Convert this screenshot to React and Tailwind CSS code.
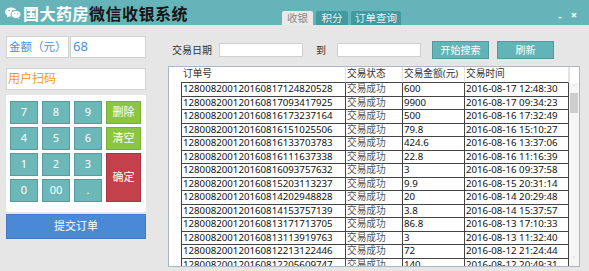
import React from "react";

const orders = [
  ["128008200120160817124820528", "600", "2016-08-17 12:48:30"],
  ["128008200120160817093417925", "9900", "2016-08-17 09:34:23"],
  ["128008200120160816173237164", "500", "2016-08-16 17:32:49"],
  ["128008200120160816151025506", "79.8", "2016-08-16 15:10:27"],
  ["128008200120160816133703783", "424.6", "2016-08-16 13:37:06"],
  ["128008200120160816111637338", "22.8", "2016-08-16 11:16:39"],
  ["128008200120160816093757632", "3", "2016-08-16 09:37:58"],
  ["128008200120160815203113237", "9.9", "2016-08-15 20:31:14"],
  ["128008200120160814202948828", "20", "2016-08-14 20:29:48"],
  ["128008200120160814153757139", "3.8", "2016-08-14 15:37:57"],
  ["128008200120160813171713705", "86.8", "2016-08-13 17:10:33"],
  ["128008200120160813113919763", "3", "2016-08-13 11:32:40"],
  ["128008200120160812213122446", "72", "2016-08-12 21:24:44"],
  ["128008200120160812205609747", "140", "2016-08-12 20:49:31"],
];

function WechatIcon() {
  return (
    <svg width="16" height="12" viewBox="0 0 16 12">
      <ellipse cx="6" cy="5" rx="6" ry="4.6" fill="#fff" />
      <path d="M2.5 8 L2 10.5 L5 9" fill="#fff" />
      <ellipse cx="11" cy="7.4" rx="5" ry="4" fill="#fff" stroke="#66b4b9" strokeWidth="1" />
      <path d="M13.5 10.5 L14.5 12 L12 11" fill="#fff" />
      <circle cx="4" cy="3.6" r="0.8" fill="#66b4b9" />
      <circle cx="8" cy="3.6" r="0.8" fill="#66b4b9" />
      <circle cx="9.4" cy="6.6" r="0.6" fill="#66b4b9" />
      <circle cx="12.6" cy="6.6" r="0.6" fill="#66b4b9" />
    </svg>
  );
}

function Header() {
  return (
    <div className="flex h-[25px] bg-[#66b4b9]">
      <div className="w-[282px] flex items-center pl-[5px] gap-[2px]">
        <WechatIcon />
        <span className="text-[16px] font-bold leading-none tracking-[0.5px] font-['Noto_Sans_CJK_SC',serif]">
          <span className="text-white">国大药房</span>
          <span className="text-[#151515]">微信收银系统</span>
        </span>
      </div>
      <div className="flex items-end gap-[3px] text-[10.5px] leading-none">
        <div className="w-[31px] h-[14px] bg-[#e9e9e9] text-[#888] rounded-t-[2px] flex items-center justify-center">收银</div>
        <div className="w-[32px] h-[14px] bg-[#3f9b9f] text-[#e8f4f4] rounded-t-[2px] flex items-center justify-center">积分</div>
        <div className="w-[50px] h-[14px] bg-[#3f9b9f] text-[#e8f4f4] rounded-t-[2px] flex items-center justify-center">订单查询</div>
      </div>
      <div className="ml-auto flex items-start pt-[9px] pr-[12px] gap-[9px] text-white text-[11px] font-bold leading-none">
        <span className="mt-[1px]">-</span>
        <span>×</span>
      </div>
    </div>
  );
}

function Key({ label, className = "" }) {
  return (
    <div className={`bg-[#6cb8b9] border border-[#5a9a9c] text-white text-[11px] flex items-center justify-center ${className}`}>
      {label}
    </div>
  );
}

function LeftPanel() {
  return (
    <div className="w-[140px] ml-[6px] pt-[11px] flex flex-col">
      <div className="flex gap-[1px] h-[22px]">
        <div className="w-[63px] border border-[#d2d2d2] bg-white text-[#4a8fd9] text-[11.5px] flex items-center pl-[2px] whitespace-nowrap">金额（元）</div>
        <div className="flex-1 border border-[#d2d2d2] bg-white text-[#4a8fd9] text-[13px] flex items-center pl-[2px]">68</div>
      </div>
      <div className="mt-[10px] h-[22px] border border-[#d2d2d2] bg-white text-[#f5962a] text-[12px] flex items-center pl-[1px]">用户扫码</div>
      <div className="mt-[5px] h-[117px] bg-white pt-[6px] pl-[4px]">
        <div className="grid grid-cols-[28px_28px_28px_35px] grid-rows-[23px_23px_23px_23px] gap-x-[4px] gap-y-[3px]">
          <Key label="7" />
          <Key label="8" />
          <Key label="9" />
          <Key label="删除" className="bg-[#8cc63f] border-[#7bb036]" />
          <Key label="4" />
          <Key label="5" />
          <Key label="6" />
          <Key label="清空" className="bg-[#8cc63f] border-[#7bb036]" />
          <Key label="1" />
          <Key label="2" />
          <Key label="3" />
          <Key label="确定" className="row-span-2 bg-[#c2414b] border-[#a9353e]" />
          <Key label="0" />
          <Key label="00" />
          <Key label="." />
        </div>
      </div>
      <div className="mt-[2px] h-[25px] bg-[#4a89d6] border border-[#3f79c2] text-white text-[11px] flex items-center justify-center">提交订单</div>
    </div>
  );
}

const cols = ["w-[165px]", "w-[57px]", "w-[62px]", "w-[104px]"];

function OrderTable() {
  return (
    <div className="mt-[7px] h-[201px] border border-[#a9b7c6] bg-white flex overflow-hidden text-[9.7px] leading-[12.5px]">
      <div className="w-[401px] flex flex-col">
        <div className="flex h-[16px] shrink-0 text-[#333]">
          <div className="w-[12px]" />
          <div className={`${cols[0]} border-r border-r-[#e2e2e2] border-b border-b-[#444] pl-[2px] flex items-center`}>订单号</div>
          <div className={`${cols[1]} border-r border-r-[#e2e2e2] border-b border-b-[#444] pl-[1px] flex items-center`}>交易状态</div>
          <div className={`${cols[2]} border-r border-r-[#e2e2e2] border-b border-b-[#444] pl-[1px] flex items-center whitespace-nowrap`}>交易金额(元)</div>
          <div className={`${cols[3]} border-r border-r-[#e2e2e2] border-b border-b-[#444] pl-[1px] flex items-center`}>交易时间</div>
        </div>
        {orders.map((o, i) => (
          <div key={i} className="flex h-[13.5px] shrink-0 text-[#111]">
            <div className="w-[12px]" />
            <div className={`${cols[0]} border-l border-r border-b border-[#444] pl-[1px] whitespace-nowrap overflow-hidden`}>{o[0]}</div>
            <div className={`${cols[1]} border-r border-b border-[#444] pl-[1px] text-[#555] whitespace-nowrap overflow-hidden`}>交易成功</div>
            <div className={`${cols[2]} border-r border-b border-[#444] pl-[1px] whitespace-nowrap overflow-hidden`}>{o[1]}</div>
            <div className={`${cols[3]} border-r border-b border-[#444] pl-[1px] whitespace-nowrap overflow-hidden`}>{o[2]}</div>
          </div>
        ))}
      </div>
      <div className="w-[10px] flex flex-col">
        <div className="h-[16px] border-l border-[#e2e2e2]" />
        <div className="flex-1 bg-[#f5f5f5] flex flex-col items-center">
          <span className="text-[7px] leading-[8px] text-[#aaa] mt-[1px]">˄</span>
          <div className="w-[8px] h-[20px] mt-[1px] bg-[#cdcdcd]" />
          <div className="flex-1" />
          <span className="text-[7px] leading-[8px] text-[#aaa] mb-[2px]">˅</span>
        </div>
      </div>
    </div>
  );
}

function RightPanel() {
  return (
    <div className="ml-[22px] w-[412px] flex flex-col">
      <div className="mt-[16px] h-[18px] flex items-center text-[10px] text-[#333]">
        <span className="w-[51px] pl-[4px]">交易日期</span>
        <div className="w-[84px] h-[14px] bg-white border border-[#cfcfcf]" />
        <span className="ml-[13px]">到</span>
        <div className="ml-[11px] w-[84px] h-[14px] bg-white border border-[#cfcfcf]" />
        <div className="ml-[11px] w-[57px] h-[18px] bg-[#62b5b6] border border-[#4f9a9c] text-white flex items-center justify-center">开始搜索</div>
        <div className="ml-[8px] w-[57px] h-[18px] bg-[#62b5b6] border border-[#4f9a9c] text-white flex items-center justify-center">刷新</div>
      </div>
      <OrderTable />
    </div>
  );
}

export default function App() {
  return (
    <div className="w-[589px] h-[271px] overflow-hidden bg-[#e6e6e6] font-['Noto_Sans','Noto_Sans_CJK_SC',sans-serif]">
      <Header />
      <div className="flex">
        <LeftPanel />
        <RightPanel />
      </div>
    </div>
  );
}
